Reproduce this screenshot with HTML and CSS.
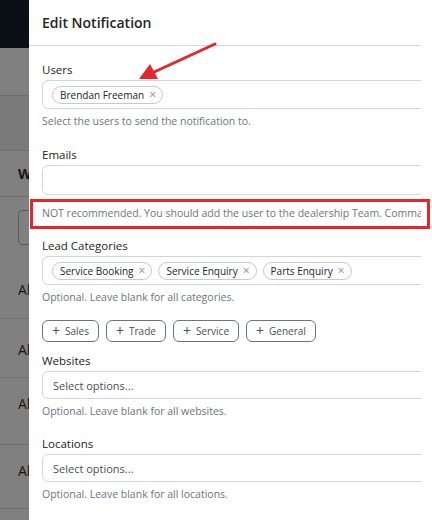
FILE: index.html
```html
<!DOCTYPE html>
<html>
<head>
<meta charset="utf-8">
<link rel="stylesheet" href="styles.css">
</head>
<body>
<div class="page">
  <div class="backdrop">
    <div class="bd-top"></div>
    <div class="bd-row r1"></div>
    <div class="bd-row r2"></div>
    <div class="bd-row r3"><span class="bd-text">W</span></div>
    <div class="bd-row r4"><div class="bd-box"></div><span class="bd-text">Al</span></div>
    <div class="bd-row r5"><span class="bd-text">Al</span></div>
    <div class="bd-row r6"><span class="bd-text">Al</span></div>
    <div class="bd-row r7"><span class="bd-text">Al</span></div>
  </div>
  <div class="panel">
    <div class="panel-header"><h1 class="title">Edit Notification</h1></div>
    <div class="panel-body">
      <div class="field">
        <label class="label">Users</label>
        <div class="input multi">
          <span class="chip">Brendan Freeman<span class="x">×</span></span>
        </div>
        <div class="help">Select the users to send the notification to.</div>
      </div>
      <div class="field emails">
        <label class="label">Emails</label>
        <div class="input textarea"></div>
        <div class="help nowrap">NOT recommended. You should add the user to the dealership Team. Comma separated list of emails.</div>
      </div>
      <div class="field tight">
        <label class="label">Lead Categories</label>
        <div class="input multi">
          <span class="chip">Service Booking<span class="x">×</span></span>
          <span class="chip">Service Enquiry<span class="x">×</span></span>
          <span class="chip">Parts Enquiry<span class="x">×</span></span>
        </div>
        <div class="help">Optional. Leave blank for all categories.</div>
      </div>
      <div class="btn-row">
        <button class="add-btn"><span class="plus">+</span>Sales</button>
        <button class="add-btn"><span class="plus">+</span>Trade</button>
        <button class="add-btn"><span class="plus">+</span>Service</button>
        <button class="add-btn"><span class="plus">+</span>General</button>
      </div>
      <div class="field websites">
        <label class="label">Websites</label>
        <div class="input select"><span class="placeholder">Select options...</span></div>
        <div class="help">Optional. Leave blank for all websites.</div>
      </div>
      <div class="field">
        <label class="label">Locations</label>
        <div class="input select"><span class="placeholder">Select options...</span></div>
        <div class="help">Optional. Leave blank for all locations.</div>
      </div>
    </div>
  </div>
  <svg class="arrow" width="432" height="100" viewBox="0 0 432 100">
    <line x1="215" y1="44" x2="152" y2="73" stroke="#e4272b" stroke-width="3" stroke-linecap="round"/>
    <polygon points="139,79 150,64 158,79" fill="#e4272b"/>
  </svg>
  <div class="highlight"></div>
</div>
</body>
</html>
```
FILE: styles.css
```css
* { box-sizing: border-box; }
html, body { margin: 0; padding: 0; background: #fff; }
body {
  width: 432px; height: 520px; overflow: hidden;
  font-family: "Open Sans", "Noto Sans", sans-serif;
  color: #212529;
}
.page { position: relative; display: flex; width: 432px; height: 520px; }

.backdrop { width: 29px; flex: none; background: #808080; overflow: hidden; }
.bd-top { height: 48px; background: #0b0f16; }
.bd-row { border-bottom: 1px solid #6e6e6e; }
.r1 { height: 48px; }
.r2 { height: 55px; background: #7a7a7a; }
.r3 { height: 46px; padding-top: 14px; }
.r4 { height: 122px; padding-top: 13px; }
.r5 { height: 59px; padding-top: 22px; }
.r6 { height: 67px; padding-top: 17px; }
.r7 { height: 64px; padding-top: 17px; }
.bd-text { display: block; padding-left: 18px; font-size: 14px; line-height: 18px; color: #151515; font-weight: 500; white-space: nowrap; }
.r3 .bd-text { font-weight: 700; }
.bd-box { margin-left: 18px; width: 40px; height: 35px; border: 1px solid #5a5a5a; border-radius: 4px; margin-bottom: 36px; }

.panel { width: 392px; flex: none; overflow: hidden; background: #fff; }
.panel-header { height: 46px; border-bottom: 1px solid #d3d5d8; padding: 0 13px; display: flex; align-items: center; }
.title { margin: 0; font-size: 14px; font-weight: 600; color: #212529; }
.panel-body { padding: 16px 0 0 13px; }

.field { margin-bottom: 19px; }
.field.emails { margin-bottom: 18px; }
.field.websites { margin-bottom: 18px; }
.field.tight { margin-bottom: 0; }
.label { display: block; font-size: 11.5px; font-weight: 500; margin-bottom: 2px; line-height: 16px; }
.input {
  width: 400px; border: 1px solid #d3d5d8; border-radius: 6px; background: #fff;
  display: flex; align-items: center; gap: 6px;
}
.multi { height: 29px; padding: 0 9px; }
.textarea { height: 30px; }
.select { height: 28px; padding: 0 10px; }
.placeholder { font-size: 11px; color: #495057; }
.chip {
  display: inline-flex; align-items: center; height: 18px; padding: 0 6px 0 7px;
  border: 1px solid #c6c9cd; border-radius: 9px; font-size: 10px; font-weight: 500; color: #212529; white-space: nowrap;
}
.x { margin-left: 5px; color: #8a8f94; font-size: 12px; font-weight: 400; }
.help { font-size: 10.5px; color: #6c757d; margin-top: 5px; line-height: 14px; }
.nowrap { white-space: nowrap; margin-top: 11px; }

.btn-row { display: flex; gap: 7px; margin: 16px 0 11px; }
.add-btn {
  height: 22px; padding: 0 9px; border: 1px solid #6c757d; border-radius: 6px; background: #fff;
  font-family: inherit; font-size: 10px; color: #495057; display: inline-flex; align-items: center;
}
.plus { font-size: 14px; margin-right: 5px; line-height: 1; color: #495057; }

.arrow { position: absolute; left: 0; top: 0; pointer-events: none; }
.highlight { position: absolute; left: 30px; top: 199px; width: 400px; height: 30px; border: 3px solid #e4272b; }
```
